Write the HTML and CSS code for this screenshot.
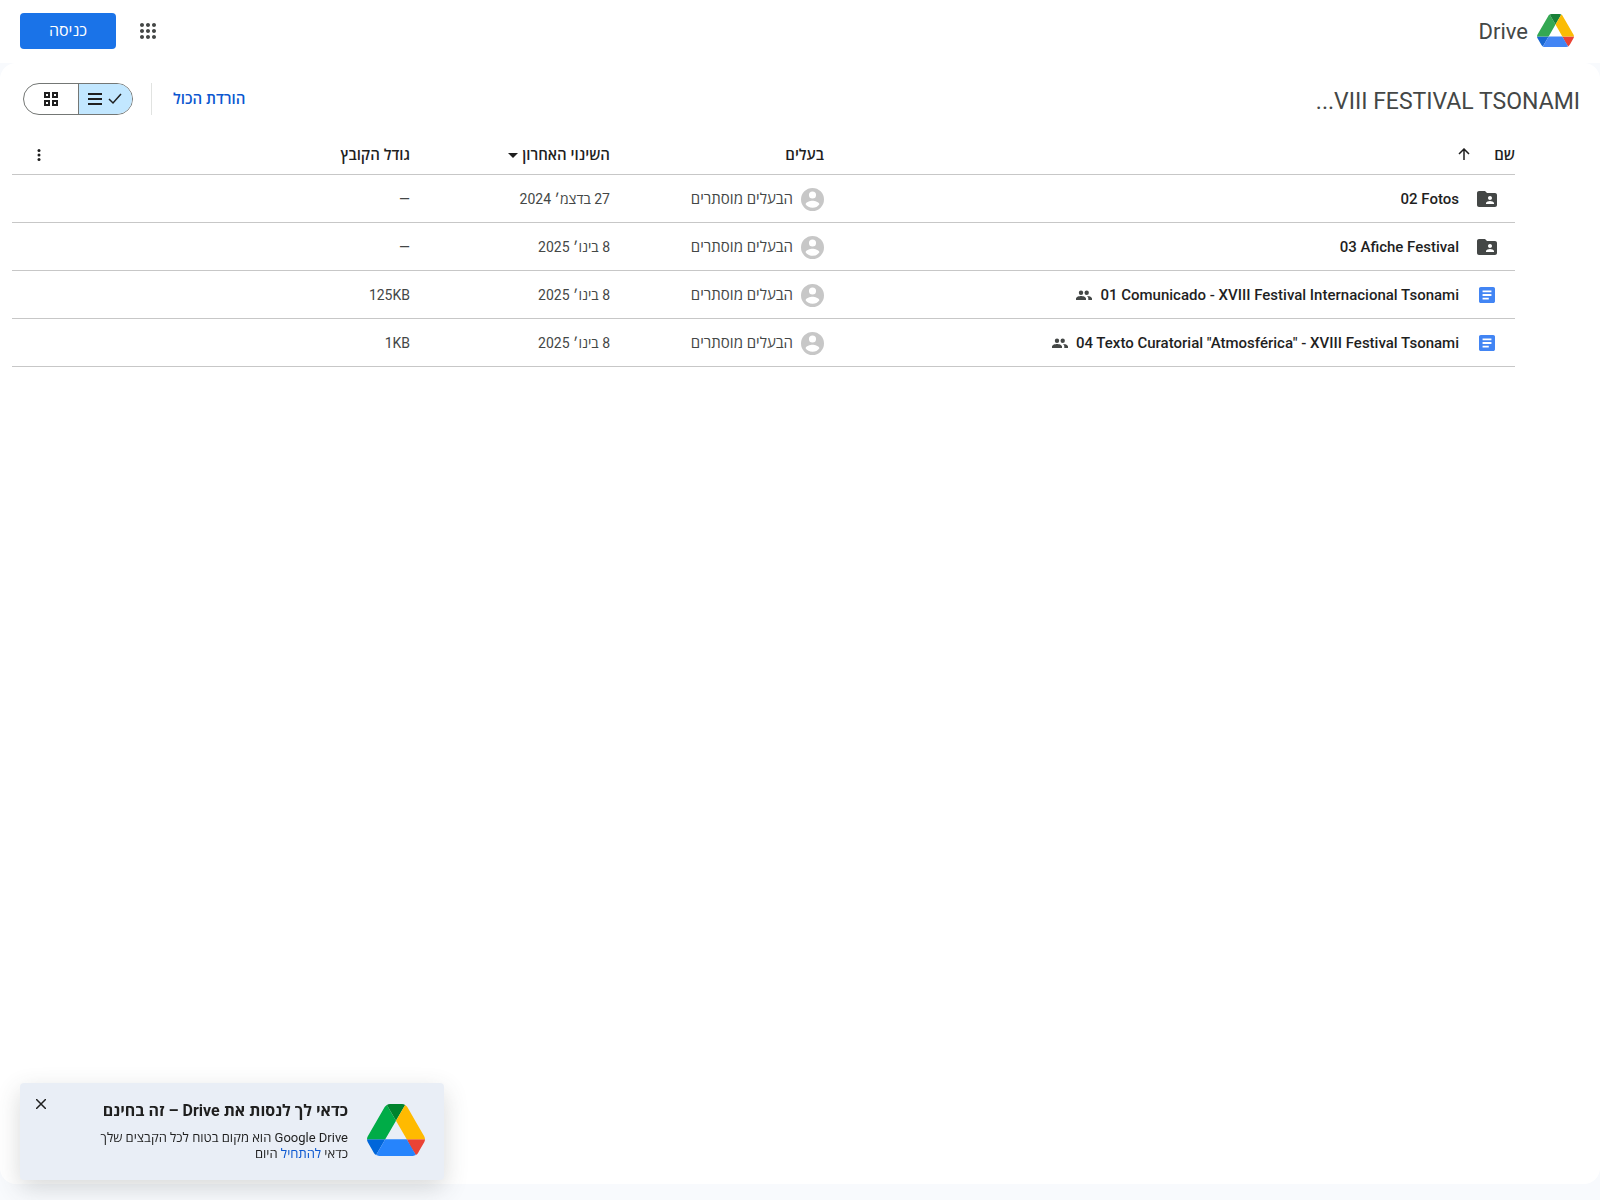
FILE: index.html
```html
<!DOCTYPE html>
<html lang="he" dir="rtl">
<head>
<meta charset="utf-8">
<meta name="viewport" content="width=device-width, initial-scale=1">
<title>VIII FESTIVAL TSONAMI – Google Drive</title>
<link rel="stylesheet" href="styles.css">
</head>
<body>
<svg class="sprite" aria-hidden="true">
  <symbol id="drive" viewBox="0 0 87.3 78">
    <path class="blue-dark" d="m6.6 66.85 3.85 6.65c.8 1.4 1.95 2.5 3.3 3.3l13.75-23.8h-27.5c0 1.55.4 3.1 1.2 4.5z"/>
    <path class="green" d="m43.65 25-13.75-23.8c-1.35.8-2.5 1.9-3.3 3.3l-25.4 44a9.06 9.06 0 0 0-1.2 4.5h27.5z"/>
    <path class="red" d="m73.55 76.8c1.35-.8 2.5-1.9 3.3-3.3l1.6-2.75 7.65-13.25c.8-1.4 1.2-2.95 1.2-4.5h-27.5l5.85 11.5z"/>
    <path class="green-dark" d="m43.65 25 13.75-23.8c-1.35-.8-2.9-1.2-4.5-1.2h-18.5c-1.6 0-3.15.45-4.5 1.2z"/>
    <path class="blue" d="m59.8 53h-32.3l-13.75 23.8c1.35.8 2.9 1.2 4.5 1.2h50.8c1.6 0 3.15-.45 4.5-1.2z"/>
    <path class="yellow" d="m73.4 26.5-12.7-22c-.8-1.4-1.95-2.5-3.3-3.3l-13.75 23.8 16.15 28h27.45c0-1.55-.4-3.1-1.2-4.5z"/>
  </symbol>
  <symbol id="folder" viewBox="0 0 24 24">
    <path d="M20 6h-8l-2-2H4c-1.1 0-2 .9-2 2v12c0 1.1.9 2 2 2h16c1.100 0 2-.9 2-2V8c0-1.100-.9-2-2-2zm-5 3c1.100 0 2 .9 2 2s-.9 2-2 2-2-.9-2-2 .9-2 2-2zm4 8h-8v-1c0-1.330 2.670-2 4-2s4 .67 4 2v1z"/>
  </symbol>
  <symbol id="doc" viewBox="0 0 16 16">
    <path fill-rule="evenodd" d="M14.220 0H1.780C.8 0 0 .8 0 1.780v12.440C0 15.200.8 16 1.780 16h12.440c.98 0 1.780-.8 1.780-1.780V1.780C16 .8 15.200 0 14.220 0zM9.780 12.440H3.560v-1.770h6.220v1.770zm2.660-3.550H3.560V7.110h8.880v1.780zm0-3.560H3.560V3.560h8.880v1.770z"/>
  </symbol>
  <symbol id="people" viewBox="0 0 16 16">
    <path d="M5 8a2.200 2.200 0 1 0 0-4.400A2.200 2.200 0 0 0 5 8zm5.700 0a2.200 2.200 0 1 0 0-4.400 2.200 2.200 0 0 0 0 4.400zM5 9.100c-1.700 0-5 .8-5 2.500V13h10v-1.400c0-1.700-3.300-2.500-5-2.500zm6 0c.8.6 1.300 1.400 1.300 2.500V13H16v-1.400c0-1.700-3.300-2.500-5-2.500z"/>
  </symbol>
  <symbol id="person" viewBox="1 1 22 22">
    <path fill-rule="evenodd" d="M12 1a11 11 0 1 0 0 22 11 11 0 0 0 0-22zm0 3.300a3.400 3.400 0 1 1 0 6.800 3.400 3.400 0 0 1 0-6.800zm0 15.700c-2.800 0-5.300-1.300-6.600-3.400.1-2.100 4.400-3.300 6.600-3.300s6.500 1.200 6.600 3.300A7.900 7.900 0 0 1 12 20z"/>
  </symbol>
</svg>

<header class="top">
  <a class="brand" href="#"><svg class="logo logo-small"><use href="#drive"/></svg><span>Drive</span></a>
  <div class="account">
    <button class="icon-button" type="button" aria-label="Google apps">
      <svg width="24" height="24" viewBox="0 0 24 24"><path d="M6 8c1.100 0 2-.9 2-2s-.9-2-2-2-2 .9-2 2 .9 2 2 2zm6 12c1.100 0 2-.9 2-2s-.9-2-2-2-2 .9-2 2 .9 2 2 2zm-6 0c1.100 0 2-.9 2-2s-.9-2-2-2-2 .9-2 2 .9 2 2 2zm0-6c1.100 0 2-.9 2-2s-.9-2-2-2-2 .9-2 2 .9 2 2 2zm6 0c1.100 0 2-.9 2-2s-.9-2-2-2-2 .9-2 2 .9 2 2 2zm4-8c0 1.100.9 2 2 2s2-.9 2-2-.9-2-2-2-2 .9-2 2zm-4 2c1.100 0 2-.9 2-2s-.9-2-2-2-2 .9-2 2 .9 2 2 2zm6 6c1.100 0 2-.9 2-2s-.9-2-2-2-2 .9-2 2 .9 2 2 2zm0 6c1.100 0 2-.9 2-2s-.9-2-2-2-2 .9-2 2 .9 2 2 2z"/></svg>
    </button>
    <a class="sign-in" href="#">כניסה</a>
  </div>
</header>

<main class="panel">
  <div class="toolbar">
    <h1 class="title">VIII FESTIVAL TSONAMI...</h1>
    <div class="actions">
      <button class="download" type="button">הורדת הכול</button>
      <div class="view-switch" role="group">
        <button class="view selected" type="button" aria-label="List" aria-pressed="true">
          <svg width="14" height="12" viewBox="0 0 14 12"><path class="stroke" d="M1 6l4 4L13 1"/></svg>
          <svg width="14" height="12" viewBox="0 0 14 12"><path d="M0 0h14v2H0zM0 5h14v2H0zM0 10h14v2H0z"/></svg>
        </button>
        <button class="view" type="button" aria-label="Grid" aria-pressed="false">
          <svg width="14" height="14" viewBox="0 0 14 14"><path fill-rule="evenodd" d="M0 0h6v6H0zM2 2v2h2V2zM8 0h6v6H8zM10 2v2h2V2zM0 8h6v6H0zM2 10v2h2v-2zM8 8h6v6H8zM10 10v2h2v-2z"/></svg>
        </button>
      </div>
    </div>
  </div>

  <table class="files">
    <colgroup><col><col class="col-owner"><col class="col-date"><col class="col-size"><col class="col-more"></colgroup>
    <thead>
      <tr>
        <th><button class="sort" type="button">שם</button><button class="direction" type="button" aria-label="Reverse sort"><svg width="12" height="12" viewBox="0 0 12 12"><path class="stroke" d="M6 12V1M1 6l5-5 5 5"/></svg></button></th>
        <th>בעלים</th>
        <th><button class="sort" type="button">השינוי האחרון <svg width="10" height="5" viewBox="0 0 10 5"><path d="M0 0h10L5 5z"/></svg></button></th>
        <th>גודל הקובץ</th>
        <th class="more"><button class="icon-button" type="button" aria-label="More"><svg width="4" height="12" viewBox="0 0 4 12"><circle cx="2" cy="1.500" r="1.500"/><circle cx="2" cy="6" r="1.500"/><circle cx="2" cy="10.500" r="1.500"/></svg></button></th>
      </tr>
    </thead>
    <tbody>
      <tr>
        <td><div class="name"><svg class="file-icon"><use href="#folder"/></svg><span dir="ltr">02 Fotos</span></div></td>
        <td><div class="owner"><svg class="avatar"><use href="#person"/></svg>הבעלים מוסתרים</div></td>
        <td>27 בדצמ׳ 2024</td><td>—</td><td></td>
      </tr>
      <tr>
        <td><div class="name"><svg class="file-icon"><use href="#folder"/></svg><span dir="ltr">03 Afiche Festival</span></div></td>
        <td><div class="owner"><svg class="avatar"><use href="#person"/></svg>הבעלים מוסתרים</div></td>
        <td>8 בינו׳ 2025</td><td>—</td><td></td>
      </tr>
      <tr>
        <td><div class="name"><svg class="file-icon doc"><use href="#doc"/></svg><span dir="ltr">01 Comunicado - XVIII Festival Internacional Tsonami</span><svg class="shared"><use href="#people"/></svg></div></td>
        <td><div class="owner"><svg class="avatar"><use href="#person"/></svg>הבעלים מוסתרים</div></td>
        <td>8 בינו׳ 2025</td><td><span dir="ltr">125KB</span></td><td></td>
      </tr>
      <tr>
        <td><div class="name"><svg class="file-icon doc"><use href="#doc"/></svg><span dir="ltr">04 Texto Curatorial "Atmosférica" - XVIII Festival Tsonami</span><svg class="shared"><use href="#people"/></svg></div></td>
        <td><div class="owner"><svg class="avatar"><use href="#person"/></svg>הבעלים מוסתרים</div></td>
        <td>8 בינו׳ 2025</td><td><span dir="ltr">1KB</span></td><td></td>
      </tr>
    </tbody>
  </table>
</main>

<aside class="promo">
  <svg class="logo logo-large"><use href="#drive"/></svg>
  <div class="promo-text">
    <h2>כדאי לך לנסות את Drive – זה בחינם</h2>
    <p>Google Drive הוא מקום בטוח לכל הקבצים שלך</p>
    <p>כדאי <a href="#">להתחיל</a> היום</p>
  </div>
  <button class="close" type="button" aria-label="Close"><svg width="10" height="10" viewBox="0 0 10 10"><path class="stroke" d="M0 0l10 10M10 0L0 10"/></svg></button>
</aside>
</body>
</html>
```
FILE: styles.css
```css
* { box-sizing: border-box; }

body {
  display: flex;
  flex-direction: column;
  min-height: 100vh;
  margin: 0;
  background: #f8fafd;
  color: #1f1f1f;
  font: 14px/20px Roboto, "Open Sans", sans-serif;
}

button {
  padding: 0;
  border: 0;
  background: none;
  color: inherit;
  font: inherit;
  cursor: pointer;
}

a { color: #0b57d0; text-decoration: none; }
svg { flex: none; fill: currentColor; }
.stroke { fill: none; stroke: currentColor; stroke-width: 1.5; }
.sprite { position: absolute; width: 0; height: 0; }

.top {
  display: flex;
  align-items: center;
  justify-content: space-between;
  height: 63px;
  padding: 0 26px 2px 20px;
  background: #fff;
}

.brand {
  display: flex;
  align-items: center;
  gap: 9px;
  color: #444746;
  font: 22px/24px Roboto, sans-serif;
}

.brand span { padding-top: 2px; }

.logo { --green: #00ac47; --green-dark: #00832d; --yellow: #ffba00; --red: #ea4335; --blue: #2684fc; --blue-dark: #0066da; }
.logo-small { --green: #34a853; --green-dark: #188038; --yellow: #fbbc04; --blue: #4285f4; --blue-dark: #1967d2; width: 37px; height: 33px; }
.logo-large { width: 58px; height: 52px; }
.green { fill: var(--green); }
.green-dark { fill: var(--green-dark); }
.yellow { fill: var(--yellow); }
.red { fill: var(--red); }
.blue { fill: var(--blue); }
.blue-dark { fill: var(--blue-dark); }

.account { display: flex; align-items: center; gap: 12px; color: #444746; }

.icon-button {
  display: flex;
  align-items: center;
  justify-content: center;
  width: 40px;
  height: 40px;
}

.sign-in {
  height: 36px;
  width: 96px;
  border-radius: 4px;
  background: #1a73e8;
  color: #fff;
  font: 500 16px/34px "Open Sans", sans-serif;
  text-align: center;
}

.panel {
  flex: 1;
  margin-bottom: 16px;
  border-radius: 16px;
  background: #fff;
}

.toolbar {
  display: flex;
  align-items: center;
  justify-content: space-between;
  height: 71px;
  padding: 0 20px 0 23px;
}

.title {
  margin: 0;
  padding-top: 6px;
  color: #444746;
  font: 23px/32px Roboto, sans-serif;
}

.actions { display: flex; align-items: center; }

.download {
  height: 32px;
  padding: 0 0 2px 21px;
  border-left: 1px solid #e1e3e1;
  color: #0b57d0;
  font: 600 15px/28px "Open Sans", sans-serif;
}

.view-switch {
  display: flex;
  height: 32px;
  margin-right: 18px;
  border: 1px solid #747775;
  border-radius: 16px;
  overflow: hidden;
}

.view { display: flex; align-items: center; justify-content: center; gap: 6px; width: 54px; }
.selected { padding-right: 2px; border-left: 1px solid #747775; background: #c2e7ff; }

.files {
  width: calc(100% - 97px);
  margin: 0 85px 0 12px;
  border-collapse: collapse;
  table-layout: fixed;
}

.col-owner { width: 214px; }
.col-date { width: 200px; }
.col-size { width: 345px; }
.col-more { width: 53px; }

th, td { height: 48px; padding: 0; border-bottom: 1px solid #c7c7c7; text-align: right; }
th { height: 40px; font: 600 15px/20px "Open Sans", sans-serif; }
td { padding-top: 2px; color: #444746; font: 14px/20px Roboto, "Open Sans", sans-serif; }

.direction { margin-right: 24px; }
.sort svg { vertical-align: middle; }
.more { padding-top: 2px; }
.more .icon-button { height: 20px; margin-right: 6px; }

.name { display: flex; align-items: center; color: #1f1f1f; font: 500 15px/20px Roboto, sans-serif; }
.file-icon { width: 24px; height: 24px; margin: 0 16px; color: #444746; }
.doc { padding: 4px; color: #4285f4; }
.shared { width: 16px; height: 16px; margin-right: 8px; color: #444746; }
.owner { display: flex; align-items: center; gap: 8px; font-size: 15px; }
.avatar { width: 23px; height: 23px; color: #c7c7c7; }

.promo {
  position: fixed;
  bottom: 20px;
  left: 20px;
  display: flex;
  align-items: flex-start;
  width: 424px;
  padding: 16px 19px 18px 16px;
  border-radius: 4px;
  background: #e9eef6;
  box-shadow: 0 8px 24px rgba(60, 64, 67, .2);
}

.logo-large { margin: 5px 0 0 19px; }
.promo-text { flex: 1; }
.promo h2 { margin: 0 0 7px; font: 700 16px/24px Roboto, "Open Sans", sans-serif; }
.promo p { margin: 0; font: 13px/16px Roboto, "Open Sans", sans-serif; }
.close { line-height: 10px; }
```
